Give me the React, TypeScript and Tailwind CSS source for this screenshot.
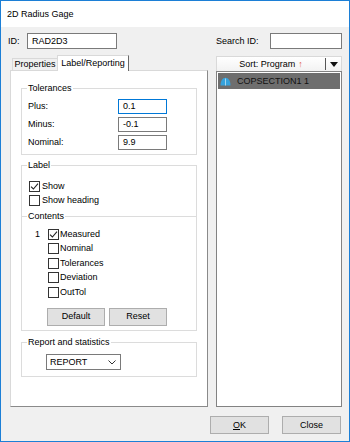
import React from 'react'

const FONT = "font-['Liberation_Sans',Arial,sans-serif]"

function Check({ checked }: { checked?: boolean }) {
  return (
    <span className="w-[11px] h-[11px] border border-[#333333] bg-white flex items-center justify-center shrink-0">
      {checked && (
        <svg width="9" height="9" viewBox="0 0 9 9">
          <path d="M1 4.6 L3.4 7 L8 1.6" fill="none" stroke="#222" strokeWidth="1.1" />
        </svg>
      )}
    </span>
  )
}

function Group({
  title,
  className,
  children,
}: {
  title: string
  className: string
  children: React.ReactNode
}) {
  return (
    <fieldset className={`border border-[#dcdcdc] min-w-0 ${className}`}>
      <legend className="ml-[5px] px-[1px] leading-[11px]">{title}</legend>
      {children}
    </fieldset>
  )
}

function Button({ children, width }: { children: React.ReactNode; width: string }) {
  return (
    <div
      className={`${width} h-[18px] bg-[#e1e1e1] border border-[#adadad] flex items-center justify-center`}
    >
      {children}
    </div>
  )
}

const TOLERANCES: [string, string, boolean][] = [
  ['Plus:', '0.1', true],
  ['Minus:', '-0.1', false],
  ['Nominal:', '9.9', false],
]

const CONTENTS: [string, string, boolean][] = [
  ['1', 'Measured', true],
  ['', 'Nominal', false],
  ['', 'Tolerances', false],
  ['', 'Deviation', false],
  ['', 'OutTol', false],
]

export default function App() {
  return (
    <div
      className={`w-[350px] h-[442px] border border-[#1c7fd6] flex flex-col bg-[#f0f0f0] text-[9px] leading-[11px] text-black ${FONT}`}
    >
      {/* Title bar */}
      <div className="h-[26px] shrink-0 bg-white flex items-center pl-[6px]">2D Radius Gage</div>

      <div className="flex-1 flex flex-col pt-[6px]">
        {/* ID row */}
        <div className="h-[16px] flex items-center">
          <div className="w-[215px] flex items-center pl-[7px]">
            <span className="w-[19px]">ID:</span>
            <div className="w-[90px] h-[16px] border border-[#7a7a7a] bg-white flex items-center pl-[4px]">
              RAD2D3
            </div>
          </div>
          <span className="w-[54px]">Search ID:</span>
          <div className="w-[72px] h-[16px] border border-[#7a7a7a] bg-white" />
        </div>

        {/* Main area */}
        <div className="mt-[6px] h-[352px] flex pl-[9px]">
          {/* Tabs + panel */}
          <div className="w-[198px] flex flex-col">
            <div className="h-[15px] flex items-end pl-[2px]">
              <div className="w-[45px] h-[12px] border-t border-l border-[#d9d9d9] bg-[#f0f0f0] flex items-center justify-center">
                Properties
              </div>
              <div className="relative z-10 -mb-[1px] w-[72px] h-[16px] border-t border-l border-[#d9d9d9] border-r border-r-[#696969] bg-white flex items-center justify-center">
                Label/Reporting
              </div>
            </div>
            <div className="flex-1 bg-white border-t border-l border-[#d9d9d9] border-r border-b border-r-[#8a8a8a] border-b-[#8a8a8a] px-[10px] pt-[12px]">
              <Group title="Tolerances" className="pt-[5px] pb-[4px]">
                <div className="flex flex-col gap-[3px] pl-[6px]">
                  {TOLERANCES.map(([label, value, focus]) => (
                    <div key={label} className="h-[15px] flex items-center">
                      <span className="w-[90px]">{label}</span>
                      <div
                        className={`w-[49px] h-[15px] border bg-white flex items-center pl-[4px] ${
                          focus ? 'border-[#0078d7]' : 'border-[#7a7a7a]'
                        }`}
                      >
                        {value}
                      </div>
                    </div>
                  ))}
                </div>
              </Group>

              <Group title="Label" className="mt-[5px] pt-[8px] pb-[4px]">
                <div className="h-[14px] flex items-center pl-[7px]">
                  <Check checked />
                  <span className="ml-[2px]">Show</span>
                </div>
                <div className="h-[14px] flex items-center pl-[7px]">
                  <Check />
                  <span className="ml-[2px]">Show heading</span>
                </div>

                {/* Contents separator */}
                <div className="mt-[4px] h-[11px] flex items-center">
                  <span className="w-[5px] border-t border-[#dcdcdc]" />
                  <span className="px-[1px]">Contents</span>
                  <span className="flex-1 border-t border-[#dcdcdc]" />
                </div>

                <div className="mt-[5px]">
                  {CONTENTS.map(([idx, label, checked]) => (
                    <div key={label} className="h-[14.5px] flex items-center pl-[13px]">
                      <span className="w-[13px]">{idx}</span>
                      <Check checked={checked} />
                      <span className="ml-[1px]">{label}</span>
                    </div>
                  ))}
                </div>

                <div className="mt-[8px] flex gap-[4px] pl-[25px]">
                  <Button width="w-[58px]">Default</Button>
                  <Button width="w-[58px]">Reset</Button>
                </div>
              </Group>

              <Group title="Report and statistics" className="mt-[6px] pt-[6.5px] pb-[6px]">
                <div className="ml-[24px] w-[75px] h-[16px] border border-[#7a7a7a] bg-white flex items-center justify-between pl-[3px] pr-[4px]">
                  <span>REPORT</span>
                  <svg width="8" height="5" viewBox="0 0 8 5">
                    <path d="M0.5 0.5 L4 4 L7.5 0.5" fill="none" stroke="#333" strokeWidth="1" />
                  </svg>
                </div>
              </Group>
            </div>
          </div>

          {/* Right list */}
          <div className="ml-[8px] w-[126px] flex flex-col pt-[1px]">
            <div className="h-[15px] border-t border-l border-r border-[#d9d9d9] bg-gradient-to-b from-white to-[#f2f2f2] flex">
              <div className="flex-1 flex items-center justify-center">
                <span>Sort: Program</span>
                <span className="ml-[3px] text-[#e0603c]">↑</span>
              </div>
              <div className="w-[16px] flex items-center justify-center border-l border-[#555555] my-[1px]">
                <svg width="8" height="5" viewBox="0 0 8 5">
                  <path d="M0 0 L8 0 L4 5 Z" fill="#111" />
                </svg>
              </div>
            </div>
            <div className="flex-1 border border-[#828282] bg-white p-[1px]">
              <div className="h-[16px] bg-[#6e6e6e] flex items-center pl-[2px] text-[#111111]">
                <svg width="11" height="9" viewBox="0 0 11 9" className="shrink-0">
                  <path d="M0.5 8.5 C0.5 3.5 2.8 0.8 5.5 0.8 C8.2 0.8 10.5 3.5 10.5 8.5 Z" fill="#36a2dc" />
                  <path d="M5.5 1.5 L5.5 8.5" stroke="#bfe3f5" strokeWidth="0.8" />
                </svg>
                <span className="ml-[6px]">COPSECTION1 1</span>
              </div>
            </div>
          </div>
        </div>

        {/* Bottom buttons */}
        <div className="mt-[9px] h-[18px] flex pl-[209px]">
          <Button width="w-[59px]">
            <span className="underline">O</span>K
          </Button>
          <div className="w-[13px]" />
          <Button width="w-[59px]">Close</Button>
        </div>
      </div>
    </div>
  )
}
